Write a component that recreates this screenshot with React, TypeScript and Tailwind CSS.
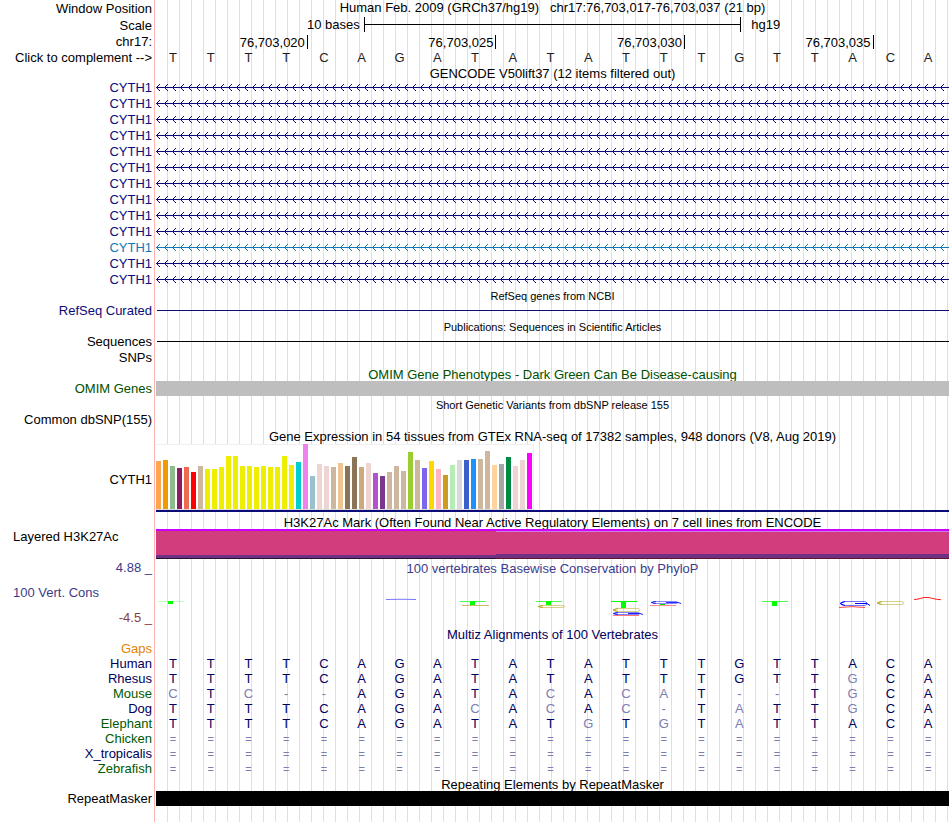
import type { ReactNode } from 'react';
import clsx from 'clsx';

const REFERENCE = 'TTTTCAGATATATTTGTTACA';

const transcripts = Array.from({ length: 13 }, (_, i) => ({ id: i, name: 'CYTH1', alt: i === 10 }));

const species = [
  { name: 'Human', bases: REFERENCE, color: 'text-[#00005a]' },
  { name: 'Rhesus', bases: 'TTTTCAGATATATTTGTTGCA', color: 'text-[#00005a]' },
  { name: 'Mouse', bases: 'CTC--AGATACACAT--TGCA', color: 'text-[#005a00]' },
  { name: 'Dog', bases: 'TTTTCAGACACAC-TATTGCA', color: 'text-[#00005a]' },
  { name: 'Elephant', bases: 'TTTTCAGATATGTGTATTACA', color: 'text-[#005a00]' },
  { name: 'Chicken', bases: '=====================', color: 'text-[#005a00]' },
  { name: 'X_tropicalis', bases: '=====================', color: 'text-[#00005a]' },
  { name: 'Zebrafish', bases: '=====================', color: 'text-[#005a00]' },
];

// [height, color] per GTEx tissue
const tissues: [number, string][] = [
  [48, '#ffa54f'], [49, '#ee9a00'], [43, '#8fbc8f'], [41, '#8b1c62'], [42, '#ee6a50'], [37, '#ff0000'],
  [43, '#cdb79e'], [40, '#eeee00'], [40, '#eeee00'], [42, '#eeee00'], [53, '#eeee00'], [53, '#eeee00'],
  [43, '#eeee00'], [43, '#eeee00'], [42, '#eeee00'], [43, '#eeee00'], [42, '#eeee00'], [42, '#eeee00'],
  [53, '#eeee00'], [44, '#eeee00'], [47, '#00cdcd'], [65, '#ee82ee'], [33, '#9ac0cd'], [45, '#eed5d2'],
  [43, '#eed5d2'], [42, '#cdb79e'], [46, '#eec591'], [43, '#8b7355'], [52, '#8b7355'], [42, '#cdaa7d'],
  [46, '#eed5d2'], [36, '#b452cd'], [33, '#7a378b'], [37, '#cdb79e'], [43, '#cdb79e'], [38, '#cdb79e'],
  [57, '#9acd32'], [49, '#cdb79e'], [41, '#7a67ee'], [48, '#ffd700'], [40, '#ffb6c1'], [34, '#cd9b1d'],
  [44, '#b4eeb4'], [49, '#d9d9d9'], [49, '#3a5fcd'], [50, '#1e90ff'], [50, '#cdb79e'], [58, '#cdb79e'],
  [44, '#ffd39b'], [45, '#a6a6a6'], [52, '#008b45'], [43, '#eed5d2'], [49, '#eed5d2'], [56, '#ff00ff'],
];

interface RowProps {
  label?: ReactNode;
  labelClass?: string;
  height: string;
  children?: ReactNode;
}

const Row = ({ label, labelClass, height, children }: RowProps) => (
  <div className={clsx('flex', height)}>
    <div
      className={clsx(
        'flex w-[155px] shrink-0 items-center justify-end border-r border-[#ffb4b4] pr-0.5 whitespace-pre',
        labelClass,
      )}
    >
      {label}
    </div>
    <div className="ml-px min-w-0 flex-1 bg-[repeating-linear-gradient(to_right,transparent_0_11px,#dcdcfa_11px_12px)]">
      {children}
    </div>
  </div>
);

interface TitleProps {
  text: string;
  height: string;
  className?: string;
}

const Title = ({ text, height, className }: TitleProps) => (
  <Row height={height}>
    <h2 className={clsx('text-center whitespace-pre', className)}>{text}</h2>
  </Row>
);

interface BasesProps {
  bases: string;
  colorFor: (base: string, index: number) => string;
}

const Bases = ({ bases, colorFor }: BasesProps) => (
  <div className="grid grid-cols-[repeat(21,minmax(0,1fr))] text-center leading-[15px]">
    {bases.split('').map((base, i) => (
      <span key={i} className={clsx('pr-1', base === '=' && 'text-[11px] leading-4', colorFor(base, i))}>
        {base}
      </span>
    ))}
  </div>
);

const alignmentColor = (base: string, index: number) =>
  base === REFERENCE[index] ? 'text-[#00005f]' : 'text-[#7d7daf]';

const TranscriptLine = ({ id, color }: { id: string; color: string }) => (
  <svg className="block h-4 w-full" shapeRendering="crispEdges" aria-hidden="true">
    <defs>
      <pattern id={id} width="8" height="16" patternUnits="userSpaceOnUse">
        <path
          d="M0 7h8v1h-8zM1 6h1v1h-1zM2 5h1v1h-1zM3 4h1v1h-1zM1 8h1v1h-1zM2 9h1v1h-1zM3 10h1v1h-1z"
          fill={color}
        />
      </pattern>
    </defs>
    <rect width="100%" height="16" fill={`url(#${id})`} />
  </svg>
);

const LogoT = ({ depth, opacity = 0.7 }: { depth: number; opacity?: number }) => (
  <g fill="#00ff00" shapeRendering="crispEdges">
    <rect x="2" y="24" width="26" height="1" opacity={opacity} />
    <rect x="12" y="24" width="5" height={depth} />
  </g>
);

// stretched C / G letters of the conservation logo, flattened to a ring with a heavy left end
const LogoRing = ({ y, height, color, bar }: { y: number; height: number; color: string; bar?: boolean }) => (
  <g fill="none" stroke={color}>
    <rect x="5" y={y + 0.5} width="26" height={height - 1} rx="3" strokeOpacity="0.55" />
    <path d={`M9 ${y + 0.5}L4 ${y + height / 2}L9 ${y + height - 0.5}`} />
    {bar && <path d={`M19 ${y + height / 2}H31L34 ${y + height - 0.5}`} />}
  </g>
);

const logos: Record<number, ReactNode> = {
  0: <LogoT depth={3} opacity={0.25} />,
  6: <path d="M3 22.5Q18 22 33 22.5" stroke="#7878ff" fill="none" />,
  8: (
    <>
      <LogoT depth={4} />
      <path d="M4 28.5H31" stroke="#c8be64" fill="none" />
    </>
  ),
  10: (
    <>
      <LogoT depth={4} />
      <LogoRing y={28} height={3} color="#b4aa28" />
    </>
  ),
  12: (
    <>
      <LogoT depth={7} opacity={1} />
      <LogoRing y={31} height={4} color="#b4aa28" />
      <LogoRing y={35} height={3} color="#1e1eff" bar />
      <path d="M4 38.5H30" stroke="#ff7878" fill="none" />
    </>
  ),
  13: (
    <>
      <LogoRing y={24} height={3} color="#2828ff" bar />
      <path d="M13 27.5H18" stroke="#00e600" />
      <path d="M3 28.5H29" stroke="#ff8c8c" />
    </>
  ),
  16: <LogoT depth={5} />,
  18: (
    <>
      <LogoRing y={24} height={5} color="#0000ff" bar />
      <path d="M3 30.5Q16 28.8 29 30.5" stroke="#ff4646" fill="none" />
    </>
  ),
  19: <LogoRing y={24} height={4} color="#b4aa28" />,
  20: <path d="M3 22.7Q8 22 13 20.5Q17 20 21 21.3Q25 22.5 30 22.7" stroke="#ff1e1e" fill="none" />,
};

const ScaleBar = () => (
  <div className="grid h-full grid-cols-[11fr_20fr_11fr]">
    <span className="pr-1 text-right leading-4">10 bases</span>
    <div className="flex h-[15px] items-center border-x border-black">
      <div className="h-px w-full bg-black" />
    </div>
    <span className="pl-2.5 leading-4">hg19</span>
  </div>
);

const Ruler = () => (
  <div className="grid h-full grid-cols-[4fr_5fr_5fr_5fr_2fr] pt-px pl-px">
    {['76,703,020', '76,703,025', '76,703,030', '76,703,035'].map((pos) => (
      <span key={pos} className="h-[14px] border-r border-black pr-0.5 text-right leading-[15px]">
        {pos}
      </span>
    ))}
  </div>
);

const ExpressionChart = () => (
  <div className="flex h-full flex-col">
    <div className="flex h-[66px] w-[378px] items-end gap-0.5 border-b border-[#dcdcdc] bg-white shadow-[inset_0_1px_#f0f0f0,inset_-1px_0_#f0f0f0]">
      {tissues.map(([height, color], i) => (
        <div key={i} className="w-[5px] shrink-0" style={{ height, backgroundColor: color }} />
      ))}
    </div>
    <div className="h-0.5 bg-[#0c0c78]" />
  </div>
);

const LayeredSignal = () => (
  <div className="grid h-full grid-cols-[9fr_12fr]">
    <div className="flex flex-col">
      <div className="h-0.5 bg-[#cc00ff]" />
      <div className="flex-1 bg-[#d23e7d]" />
      <div className="h-[3px] bg-[#6e3282]" />
      <div className="h-px bg-[#281430]" />
    </div>
    <div className="flex flex-col">
      <div className="h-0.5 bg-[#cc00ff]" />
      <div className="h-px bg-[#d278e6]" />
      <div className="flex-1 bg-[#d23e7d]" />
      <div className="h-1 bg-[#6e3282]" />
      <div className="h-px bg-[#641432]" />
    </div>
  </div>
);

const Line = ({ color }: { color: string }) => (
  <div className="flex h-full items-center pl-px">
    <div className={clsx('h-px w-full', color)} />
  </div>
);

const App = () => (
  <main className="flex flex-col bg-white pr-px font-['Liberation_Sans',Arial,sans-serif] text-[13px] leading-4 text-black">
    <Row label="Window Position" height="h-[17px]">
      <h1 className="text-center whitespace-pre">
        {'Human Feb. 2009 (GRCh37/hg19)   chr17:76,703,017-76,703,037 (21 bp)'}
      </h1>
    </Row>
    <Row label="Scale" height="h-[17px]">
      <ScaleBar />
    </Row>
    <Row label="chr17:" height="h-4">
      <Ruler />
    </Row>
    <Row label={<button type="button">{'Click to complement -->'}</button>} height="h-4">
      <Bases bases={REFERENCE} colorFor={() => 'text-[#1e1e1e]'} />
    </Row>

    <Title text="GENCODE V50lift37 (12 items filtered out)" height="h-[14px]" />
    {transcripts.map(({ id, name, alt }) => (
      <Row
        key={id}
        height="h-4"
        label={<a href="#cyth1">{name}</a>}
        labelClass={alt ? 'text-[#1478b4]' : 'text-[#0c0c78]'}
      >
        <TranscriptLine id={`strand-${id}`} color={alt ? '#1478b4' : '#0c0c78'} />
      </Row>
    ))}

    <Title text="RefSeq genes from NCBI" height="h-[15px]" className="text-[11px]" />
    <Row label="RefSeq Curated" labelClass="text-[#0c0c78]" height="h-[15px]">
      <Line color="bg-[#0c0c78]" />
    </Row>

    <Title
      text="Publications: Sequences in Scientific Articles"
      height="h-4"
      className="text-[11px] leading-[18px]"
    />
    <Row label="Sequences" height="h-[15px]">
      <Line color="bg-black" />
    </Row>
    <Row label="SNPs" height="h-[17px]" />

    <Title
      text="OMIM Gene Phenotypes - Dark Green Can Be Disease-causing"
      height="h-[15px]"
      className="leading-[18px] text-[#005000]"
    />
    <Row label="OMIM Genes" labelClass="text-[#005000]" height="h-[15px]">
      <div className="h-full bg-[#bebebe]" />
    </Row>

    <Title
      text="Short Genetic Variants from dbSNP release 155"
      height="h-4"
      className="text-[11px] leading-[18px]"
    />
    <Row label="Common dbSNP(155)" height="h-[15px]" />

    <Title
      text="Gene Expression in 54 tissues from GTEx RNA-seq of 17382 samples, 948 donors (V8, Aug 2019)"
      height="h-[17px]"
      className="leading-5"
    />
    <Row label={<a href="#cyth1">CYTH1</a>} labelClass="pt-1" height="h-[68px]">
      <ExpressionChart />
    </Row>

    <Title
      text="H3K27Ac Mark (Often Found Near Active Regulatory Elements) on 7 cell lines from ENCODE"
      height="h-[17px]"
      className="leading-[22px]"
    />
    <Row label={<span className="w-full self-start pl-[13px]">Layered H3K27Ac</span>} height="h-[30px]">
      <LayeredSignal />
    </Row>

    <Row label="4.88 _" labelClass="text-[#3c3c8c]" height="h-[18px]">
      <h2 className="text-center leading-5 text-[#3c3c8c]">
        100 vertebrates Basewise Conservation by PhyloP
      </h2>
    </Row>
    <Row
      height="h-[50px]"
      labelClass="text-[#3c3c8c]"
      label={
        <div className="flex w-full flex-col text-right">
          <span className="pl-[13px] text-left leading-8">100 Vert. Cons</span>
          <span className="leading-[18px] text-[#8c3c3c]">-4.5 _</span>
        </div>
      }
    >
      <div className="grid h-full grid-cols-[repeat(21,minmax(0,1fr))]">
        {REFERENCE.split('').map((_, i) => (
          <div key={i}>
            {logos[i] && (
              <svg width="36" height="50" viewBox="0 0 36 50" className="block" aria-hidden="true">
                {logos[i]}
              </svg>
            )}
          </div>
        ))}
      </div>
    </Row>

    <Title text="Multiz Alignments of 100 Vertebrates" height="h-[15px]" className="text-[#00005a]" />
    <Row label="Gaps" labelClass="text-[#e68200]" height="h-[14px]" />
    {species.map(({ name, bases, color }) => (
      <Row key={name} label={name} labelClass={color} height="h-[15px]">
        <Bases bases={bases} colorFor={alignmentColor} />
      </Row>
    ))}

    <Title text="Repeating Elements by RepeatMasker" height="h-[15px]" className="leading-[18px]" />
    <Row label="RepeatMasker" height="h-[15px]">
      <div className="h-full bg-black" />
    </Row>
    <Row height="h-4" />
  </main>
);

export default App;
